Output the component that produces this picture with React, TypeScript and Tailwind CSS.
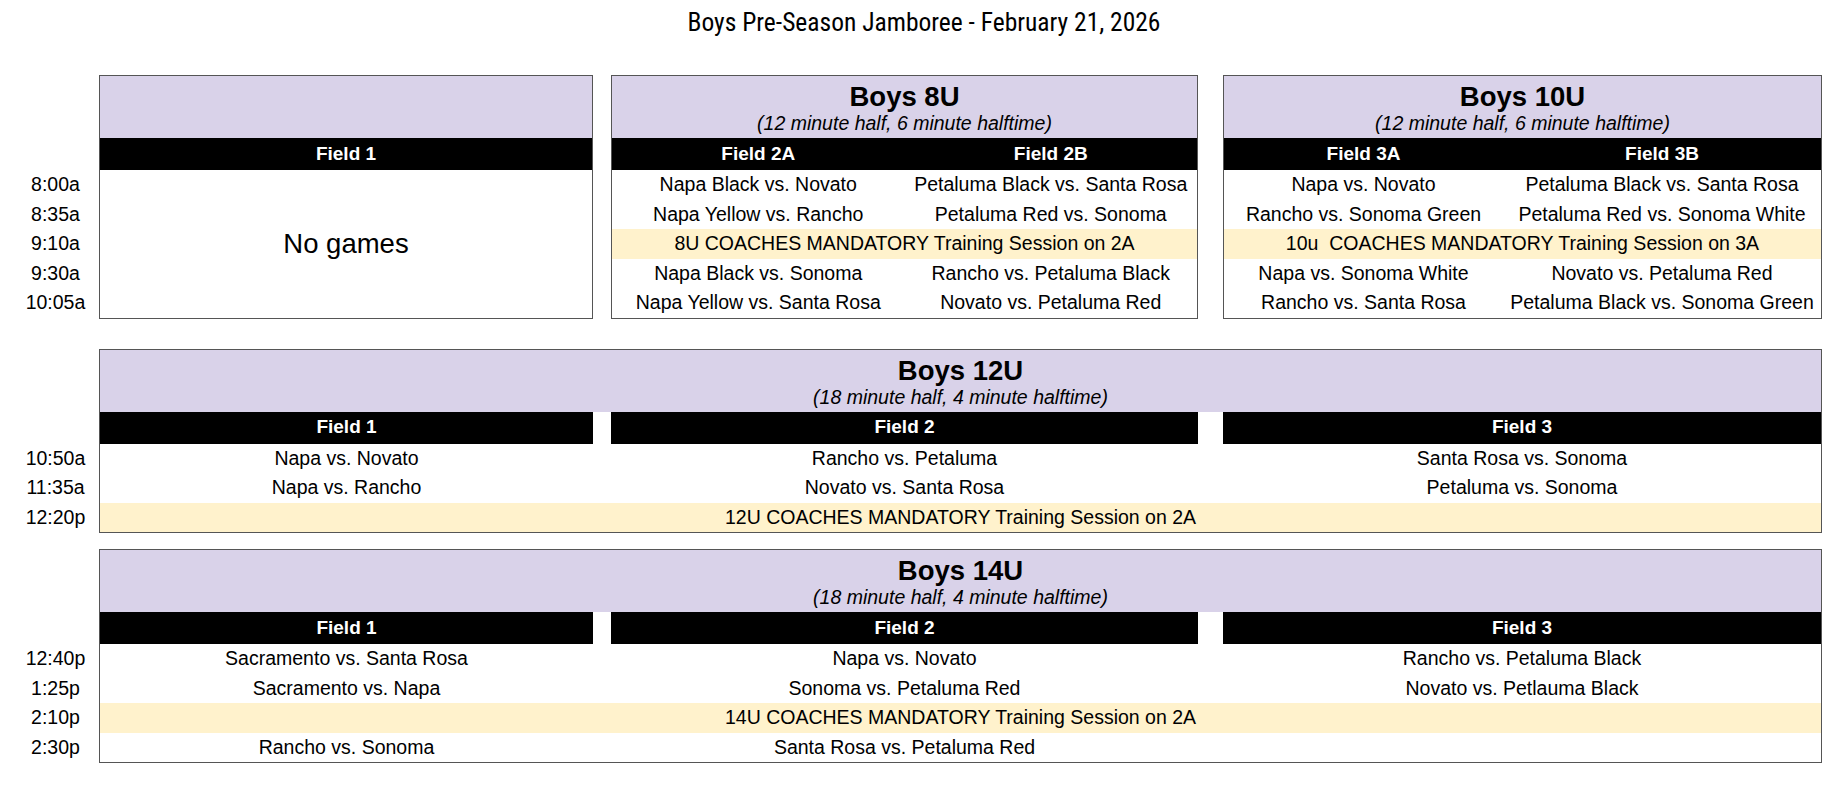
import React from 'react';

type Row = { time: string; cells?: string[]; note?: string };

const rowCls = 'h-[29.5px] flex items-center justify-center whitespace-pre';

const TimeCol: React.FC<{ times: string[] }> = ({ times }) => (
  <div className="w-[99px] shrink-0 pl-[12px]">
    <div className="h-[95px]" />
    {times.map((t) => (
      <div key={t} className={rowCls}>
        {t}
      </div>
    ))}
  </div>
);

const Header: React.FC<{ title?: string; sub?: string }> = ({ title, sub }) => (
  <div className="h-[62px] bg-[#d9d2e9] pt-[6px] text-center">
    {title && <div className="text-[27.5px] font-bold leading-[30px]">{title}</div>}
    {sub && <div className="text-[19.5px] italic leading-[22px]">{sub}</div>}
  </div>
);

const SmallTable: React.FC<{
  width: string;
  cols: string;
  title?: string;
  sub?: string;
  fields: string[];
  rows: Row[];
}> = ({ width, cols, title, sub, fields, rows }) => (
  <div className={`${width} border border-[#555] shrink-0`}>
    <Header title={title} sub={sub} />
    <div className={`grid ${cols} h-[32px] bg-black text-white font-bold text-[19px]`}>
      {fields.map((f) => (
        <div key={f} className="flex items-center justify-center">
          {f}
        </div>
      ))}
    </div>
    {rows.map((r) =>
      r.note ? (
        <div key={r.time} className={`${rowCls} bg-[#fff2cc]`}>
          {r.note}
        </div>
      ) : (
        <div key={r.time} className={`grid ${cols}`}>
          {(r.cells || []).map((c, i) => (
            <div key={i} className={rowCls}>
              {c}
            </div>
          ))}
        </div>
      )
    )}
  </div>
);

const WideCols: React.FC<{ items: React.ReactNode[]; black?: boolean }> = ({ items, black }) => {
  const bar = black ? 'bg-black text-white font-bold text-[19px] h-[32px]' : 'h-[29.5px]';
  return (
    <div className="flex">
      <div className={`w-[493px] flex items-center justify-center ${bar}`}>{items[0]}</div>
      <div className="w-[18px]" />
      <div className={`w-[587px] flex items-center justify-center ${bar}`}>{items[1]}</div>
      <div className="w-[25px]" />
      <div className={`w-[598px] flex items-center justify-center ${bar}`}>{items[2]}</div>
    </div>
  );
};

const WideSection: React.FC<{ title: string; sub: string; rows: Row[]; className?: string }> = ({
  title,
  sub,
  rows,
  className,
}) => (
  <div className={`flex ${className || ''}`}>
    <TimeCol times={rows.map((r) => r.time)} />
    <div className="w-[1723px] border border-[#555]">
      <Header title={title} sub={sub} />
      <WideCols black items={['Field 1', 'Field 2', 'Field 3']} />
      {rows.map((r) =>
        r.note ? (
          <div key={r.time} className={`${rowCls} bg-[#fff2cc]`}>
            {r.note}
          </div>
        ) : (
          <WideCols key={r.time} items={r.cells || []} />
        )
      )}
    </div>
  </div>
);

const boys8: Row[] = [
  { time: '8:00a', cells: ['Napa Black vs. Novato', 'Petaluma Black vs. Santa Rosa'] },
  { time: '8:35a', cells: ['Napa Yellow vs. Rancho', 'Petaluma Red vs. Sonoma'] },
  { time: '9:10a', note: '8U COACHES MANDATORY Training Session on 2A' },
  { time: '9:30a', cells: ['Napa Black vs. Sonoma', 'Rancho vs. Petaluma Black'] },
  { time: '10:05a', cells: ['Napa Yellow vs. Santa Rosa', 'Novato vs. Petaluma Red'] },
];

const boys10: Row[] = [
  { time: '8:00a', cells: ['Napa vs. Novato', 'Petaluma Black vs. Santa Rosa'] },
  { time: '8:35a', cells: ['Rancho vs. Sonoma Green', 'Petaluma Red vs. Sonoma White'] },
  { time: '9:10a', note: '10u  COACHES MANDATORY Training Session on 3A' },
  { time: '9:30a', cells: ['Napa vs. Sonoma White', 'Novato vs. Petaluma Red'] },
  { time: '10:05a', cells: ['Rancho vs. Santa Rosa', 'Petaluma Black vs. Sonoma Green'] },
];

const boys12: Row[] = [
  { time: '10:50a', cells: ['Napa vs. Novato', 'Rancho vs. Petaluma', 'Santa Rosa vs. Sonoma'] },
  { time: '11:35a', cells: ['Napa vs. Rancho', 'Novato vs. Santa Rosa', 'Petaluma vs. Sonoma'] },
  { time: '12:20p', note: '12U COACHES MANDATORY Training Session on 2A' },
];

const boys14: Row[] = [
  { time: '12:40p', cells: ['Sacramento vs. Santa Rosa', 'Napa vs. Novato', 'Rancho vs. Petaluma Black'] },
  { time: '1:25p', cells: ['Sacramento vs. Napa', 'Sonoma vs. Petaluma Red', 'Novato vs. Petlauma Black'] },
  { time: '2:10p', note: '14U COACHES MANDATORY Training Session on 2A' },
  { time: '2:30p', cells: ['Rancho vs. Sonoma', 'Santa Rosa vs. Petaluma Red', ''] },
];

const App: React.FC = () => {
  return (
    <div className="w-[1848px] h-[786px] bg-white text-black text-[19.5px] font-['Liberation_Sans',Arial,sans-serif] overflow-hidden">
      <div className="h-[44px] flex items-center justify-center font-['Roboto',sans-serif] font-normal text-[25.5px] [font-stretch:75%]">
        Boys Pre-Season Jamboree - February 21, 2026
      </div>

      <div className="mt-[31px] flex">
        <TimeCol times={boys8.map((r) => r.time)} />
        <div className="w-[494px] h-[243.5px] border border-[#555] shrink-0 flex flex-col">
          <div className="h-[62px] bg-[#d9d2e9]" />
          <div className="h-[32px] bg-black text-white font-bold text-[19px] flex items-center justify-center">
            Field 1
          </div>
          <div className="flex-1 flex items-center justify-center text-[27.5px]">No games</div>
        </div>
        <div className="ml-[18px]">
          <SmallTable
            width="w-[587px]"
            cols="grid-cols-2"
            title="Boys 8U"
            sub="(12 minute half, 6 minute halftime)"
            fields={['Field 2A', 'Field 2B']}
            rows={boys8}
          />
        </div>
        <div className="ml-[25px]">
          <SmallTable
            width="w-[599px]"
            cols="grid-cols-[279px_1fr]"
            title="Boys 10U"
            sub="(12 minute half, 6 minute halftime)"
            fields={['Field 3A', 'Field 3B']}
            rows={boys10}
          />
        </div>
      </div>

      <WideSection
        className="mt-[30px]"
        title="Boys 12U"
        sub="(18 minute half, 4 minute halftime)"
        rows={boys12}
      />
      <WideSection
        className="mt-[16px]"
        title="Boys 14U"
        sub="(18 minute half, 4 minute halftime)"
        rows={boys14}
      />
    </div>
  );
};

export default App;
